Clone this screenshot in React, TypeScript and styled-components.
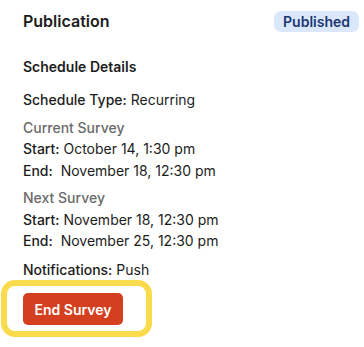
import styled, { createGlobalStyle } from "styled-components";

const GlobalStyle = createGlobalStyle`
  html, body {
    margin: 0;
    padding: 0;
    background: #ffffff;
  }
  body {
    font-family: Inter, "Noto Sans", "Liberation Sans", sans-serif;
    color: #1c1c1c;
    -webkit-font-smoothing: antialiased;
  }
`;

const Panel = styled.div`
  width: 364px;
  height: 347px;
  box-sizing: border-box;
  display: flex;
  flex-direction: column;
`;

const Header = styled.div`
  display: flex;
  align-items: center;
  justify-content: space-between;
  margin-top: 11px;
  padding: 0 5px 0 23px;
`;

const Title = styled.h2`
  margin: 0;
  font-size: 16px;
  font-weight: 600;
  line-height: 21px;
  color: #1c1c1c;
`;

const Badge = styled.span`
  display: inline-flex;
  align-items: center;
  height: 21px;
  padding: 0 9px 0 9px;
  border-radius: 7px;
  background: #dbe8fb;
  color: #1c3772;
  font-size: 14px;
  font-weight: 600;
`;

const Body = styled.div`
  display: flex;
  flex-direction: column;
  padding: 0 5px 0 23px;
  font-size: 14px;
  line-height: 21.5px;
`;

const SectionTitle = styled.h3`
  margin: 24px 0 11px;
  font-size: 14px;
  font-weight: 600;
  line-height: 22px;
`;

const Group = styled.div<{ $gap?: number }>`
  display: flex;
  flex-direction: column;
  margin-top: ${(p) => p.$gap ?? 6}px;
`;

const GroupLabel = styled.div`
  color: #6a6a6a;
  font-weight: 500;
`;

const Line = styled.div`
  white-space: pre;
`;

const Key = styled.span`
  font-weight: 500;
`;

const Highlight = styled.div`
  align-self: flex-start;
  margin: 0 0 0 1px;
  padding: 7px 23px 6px 16px;
  border: 6px solid #fadb4b;
  border-radius: 14px;
`;

const Button = styled.button`
  display: flex;
  align-items: center;
  justify-content: center;
  width: 100px;
  height: 32px;
  padding: 0;
  border: none;
  border-radius: 5px;
  background: #d4401f;
  color: #ffffff;
  font-family: inherit;
  font-size: 14px;
  font-weight: 600;
`;

export default function App() {
  return (
    <>
      <GlobalStyle />
      <Panel>
        <Header>
          <Title>Publication</Title>
          <Badge>Published</Badge>
        </Header>
        <Body>
          <SectionTitle>Schedule Details</SectionTitle>
          <Line>
            <Key>Schedule Type:</Key> Recurring
          </Line>
          <Group>
            <GroupLabel>Current Survey</GroupLabel>
            <Line>
              <Key>Start:</Key> October 14, 1:30 pm
            </Line>
            <Line>
              <Key>End:</Key>{"  "}November 18, 12:30 pm
            </Line>
          </Group>
          <Group>
            <GroupLabel>Next Survey</GroupLabel>
            <Line>
              <Key>Start:</Key> November 18, 12:30 pm
            </Line>
            <Line>
              <Key>End:</Key>{"  "}November 25, 12:30 pm
            </Line>
          </Group>
          <Group $gap={7}>
            <Line>
              <Key>Notifications:</Key> Push
            </Line>
          </Group>
        </Body>
        <Highlight>
          <Button type="button">End Survey</Button>
        </Highlight>
      </Panel>
    </>
  );
}
